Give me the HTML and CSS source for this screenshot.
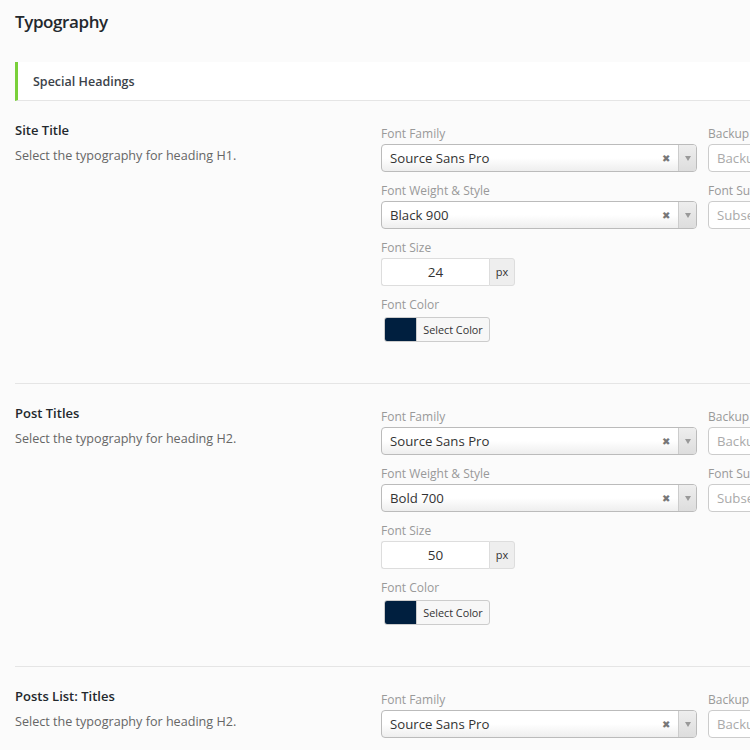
FILE: index.html
```html
<!DOCTYPE html>
<html>
<head>
<meta charset="utf-8">
<link rel="stylesheet" href="styles.css">
</head>
<body>
<div class="wrap">
  <h1 class="page-title">Typography</h1>
  <div class="panel-head">Special Headings</div>

  <div class="section">
    <div class="info">
      <div class="sec-title">Site Title</div>
      <div class="sec-desc">Select the typography for heading H1.</div>
    </div>
    <div class="fields">
      <div class="col">
        <div class="label">Font Family</div>
        <div class="select"><span class="val">Source Sans Pro</span><span class="clear">&#x2716;</span><span class="arrow"><span class="tri"></span></span></div>
        <div class="label">Font Weight &amp; Style</div>
        <div class="select"><span class="val">Black 900</span><span class="clear">&#x2716;</span><span class="arrow"><span class="tri"></span></span></div>
        <div class="label">Font Size</div>
        <div class="size"><span class="num">24</span><span class="unit">px</span></div>
        <div class="label">Font Color</div>
        <div class="color-btn"><span class="swatch"></span><span class="ctext">Select Color</span></div>
      </div>
      <div class="col">
        <div class="label">Backup Font Family</div>
        <div class="input ph">Backup Font Family</div>
        <div class="label">Font Subsets</div>
        <div class="input ph">Subsets</div>
      </div>
    </div>
  </div>

  <div class="section">
    <div class="info">
      <div class="sec-title">Post Titles</div>
      <div class="sec-desc">Select the typography for heading H2.</div>
    </div>
    <div class="fields">
      <div class="col">
        <div class="label">Font Family</div>
        <div class="select"><span class="val">Source Sans Pro</span><span class="clear">&#x2716;</span><span class="arrow"><span class="tri"></span></span></div>
        <div class="label">Font Weight &amp; Style</div>
        <div class="select"><span class="val">Bold 700</span><span class="clear">&#x2716;</span><span class="arrow"><span class="tri"></span></span></div>
        <div class="label">Font Size</div>
        <div class="size"><span class="num">50</span><span class="unit">px</span></div>
        <div class="label">Font Color</div>
        <div class="color-btn"><span class="swatch"></span><span class="ctext">Select Color</span></div>
      </div>
      <div class="col">
        <div class="label">Backup Font Family</div>
        <div class="input ph">Backup Font Family</div>
        <div class="label">Font Subsets</div>
        <div class="input ph">Subsets</div>
      </div>
    </div>
  </div>

  <div class="section">
    <div class="info">
      <div class="sec-title">Posts List: Titles</div>
      <div class="sec-desc">Select the typography for heading H2.</div>
    </div>
    <div class="fields">
      <div class="col">
        <div class="label">Font Family</div>
        <div class="select"><span class="val">Source Sans Pro</span><span class="clear">&#x2716;</span><span class="arrow"><span class="tri"></span></span></div>
      </div>
      <div class="col">
        <div class="label">Backup Font Family</div>
        <div class="input ph">Backup Font Family</div>
      </div>
    </div>
  </div>
</div>
</body>
</html>
```
FILE: styles.css
```css
html, body {
  margin: 0;
  padding: 0;
  background: #fbfbfb;
  overflow: hidden;
}
body {
  font-family: "Open Sans", "Noto Sans", sans-serif;
  color: #32373c;
  width: 750px;
  height: 750px;
}
.wrap {
  padding-left: 15px;
  width: 1100px;
}
.page-title {
  margin: 0;
  padding-top: 10px;
  height: 62px;
  box-sizing: border-box;
  font-size: 17px;
  line-height: 24px;
  font-weight: 600;
  color: #23282d;
  letter-spacing: -0.4px;
}
.panel-head {
  background: #fff;
  border-left: 3px solid #7ad03a;
  border-bottom: 1px solid #e5e5e5;
  height: 38px;
  line-height: 40px;
  padding-left: 15px;
  font-size: 12.5px;
  font-weight: 600;
  color: #3b4249;
}
.section {
  display: flex;
  border-bottom: 1px solid #e5e5e5;
  height: 283px;
  box-sizing: border-box;
}
.section:last-child { border-bottom: none; }
.info {
  width: 366px;
  flex: none;
  padding-top: 19px;
}
.sec-title {
  font-size: 13px;
  font-weight: 600;
  line-height: 20px;
  color: #23282d;
}
.sec-desc {
  margin-top: 6px;
  font-size: 12.6px;
  line-height: 20px;
  color: #666;
}
.fields {
  display: flex;
  gap: 11px;
  padding-top: 24px;
}
.col {
  width: 316px;
  flex: none;
}
.label {
  font-size: 12px;
  line-height: 18px;
  color: #999;
  margin-bottom: 1px;
}
.select {
  display: flex;
  align-items: center;
  height: 28px;
  box-sizing: border-box;
  border: 1px solid #bbb;
  border-radius: 4px;
  background: linear-gradient(#fff 0%, #fff 50%, #eee 100%);
  margin-bottom: 10px;
  overflow: hidden;
}
.val {
  flex: 1;
  padding-left: 8px;
  font-size: 13.2px;
  color: #333;
}
.clear {
  font-size: 10px;
  color: #777;
  width: 14px;
  text-align: center;
  margin-right: 5px;
}
.arrow {
  width: 17px;
  height: 100%;
  border-left: 1px solid #ccc;
  background: linear-gradient(#eee, #ddd);
  display: flex;
  align-items: center;
  justify-content: center;
}
.tri {
  width: 0;
  height: 0;
  border-left: 3.5px solid transparent;
  border-right: 3.5px solid transparent;
  border-top: 5px solid #999;
}
.input {
  height: 28px;
  box-sizing: border-box;
  border: 1px solid #ccc;
  border-radius: 4px;
  background: #fff;
  line-height: 26px;
  padding-left: 8px;
  font-size: 13.2px;
  margin-bottom: 10px;
}
.ph { color: #aaa; }
.size {
  display: flex;
  width: 134px;
  height: 28px;
  margin-bottom: 10px;
}
.num {
  flex: 1;
  border: 1px solid #ddd;
  border-right: none;
  border-radius: 3px 0 0 3px;
  background: #fff;
  text-align: center;
  line-height: 26px;
  font-size: 13.5px;
  color: #333;
}
.unit {
  width: 26px;
  box-sizing: border-box;
  border: 1px solid #ddd;
  border-radius: 0 3px 3px 0;
  background: #eee;
  text-align: center;
  line-height: 26px;
  font-size: 11px;
  color: #333;
}
.color-btn {
  display: flex;
  margin-left: 3px;
  margin-top: 3px;
  width: 106px;
  height: 25px;
  box-sizing: border-box;
  border: 1px solid #ccc;
  border-radius: 3px;
  background: #f7f7f7;
  overflow: hidden;
}
.swatch {
  width: 31px;
  background: #001f3f;
  border-right: 1px solid #ccc;
}
.ctext {
  flex: 1;
  text-align: center;
  font-size: 10.8px;
  line-height: 23px;
  color: #333;
}
```
